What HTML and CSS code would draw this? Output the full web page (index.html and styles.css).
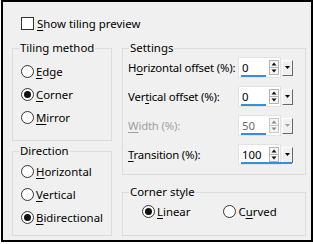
FILE: index.html
```html
<!DOCTYPE html>
<html lang="en">

<head>
    <meta charset="UTF-8">
    <title>Tiling</title>
    <link rel="stylesheet" href="styles.css">
</head>

<body>
    <div class="frame">
        <label class="top-row">
            <span class="check"></span>
            <span><u>S</u>how tiling preview</span>
        </label>
        <div class="groups">
            <div class="groups-left">
                <fieldset class="group group-tiling">
                    <legend>Tiling method</legend>
                    <div class="radio-list">
                        <label class="radio-item"><span class="radio"></span><span><u>E</u>dge</span></label>
                        <label class="radio-item"><span class="radio checked"></span><span><u>C</u>orner</span></label>
                        <label class="radio-item"><span class="radio"></span><span><u>M</u>irror</span></label>
                    </div>
                </fieldset>
                <fieldset class="group group-direction">
                    <legend>Direction</legend>
                    <div class="radio-list">
                        <label class="radio-item"><span class="radio"></span><span><u>H</u>orizontal</span></label>
                        <label class="radio-item"><span class="radio"></span><span><u>V</u>ertical</span></label>
                        <label class="radio-item"><span class="radio checked"></span><span><u>B</u>idirectional</span></label>
                    </div>
                </fieldset>
            </div>
            <div class="groups-right">
                <fieldset class="group group-settings">
                    <legend>Settings</legend>
                    <div class="field-list">
                        <div class="field-row">
                            <span class="field-label">H<u>o</u>rizontal offset (%):</span>
                            <div class="spin">
                                <div class="spin-box"><span class="spin-value">0</span>
                                    <svg class="spin-arrows" width="10" height="15" viewBox="0 0 10 15">
                                        <rect x="0.5" y="0.5" width="9" height="14" fill="#f7f7f7" stroke="#b4b4b4" />
                                        <line x1="0" y1="7.5" x2="10" y2="7.5" stroke="#b4b4b4" />
                                        <path d="M2.5 5.5H7.5L5 2.5Z" fill="#111" />
                                        <path d="M2.5 9.5H7.5L5 12.5Z" fill="#111" />
                                    </svg>
                                </div>
                                <div class="spin-drop"><svg width="5" height="3" viewBox="0 0 5 3"><path d="M0 0H5L2.5 3Z" fill="#000" /></svg></div>
                                <div class="spin-line"></div>
                            </div>
                        </div>
                        <div class="field-row">
                            <span class="field-label">Ver<u>t</u>ical offset (%):</span>
                            <div class="spin">
                                <div class="spin-box"><span class="spin-value">0</span>
                                    <svg class="spin-arrows" width="10" height="15" viewBox="0 0 10 15">
                                        <rect x="0.5" y="0.5" width="9" height="14" fill="#f7f7f7" stroke="#b4b4b4" />
                                        <line x1="0" y1="7.5" x2="10" y2="7.5" stroke="#b4b4b4" />
                                        <path d="M2.5 5.5H7.5L5 2.5Z" fill="#111" />
                                        <path d="M2.5 9.5H7.5L5 12.5Z" fill="#111" />
                                    </svg>
                                </div>
                                <div class="spin-drop"><svg width="5" height="3" viewBox="0 0 5 3"><path d="M0 0H5L2.5 3Z" fill="#000" /></svg></div>
                                <div class="spin-line"></div>
                            </div>
                        </div>
                        <div class="field-row disabled">
                            <span class="field-label"><u>W</u>idth (%):</span>
                            <div class="spin">
                                <div class="spin-box"><span class="spin-value">50</span>
                                    <svg class="spin-arrows" width="10" height="15" viewBox="0 0 10 15">
                                        <rect x="0.5" y="0.5" width="9" height="14" fill="#f4f4f4" stroke="#c8c8c8" />
                                        <line x1="0" y1="7.5" x2="10" y2="7.5" stroke="#c8c8c8" />
                                        <path d="M2.5 5.5H7.5L5 2.5Z" fill="#8a8a8a" />
                                        <path d="M2.5 9.5H7.5L5 12.5Z" fill="#8a8a8a" />
                                    </svg>
                                </div>
                                <div class="spin-drop"><svg width="5" height="3" viewBox="0 0 5 3"><path d="M0 0H5L2.5 3Z" fill="#a0a0a0" /></svg></div>
                                <div class="spin-line"></div>
                            </div>
                        </div>
                        <div class="field-row">
                            <span class="field-label"><u>T</u>ransition (%):</span>
                            <div class="spin">
                                <div class="spin-box"><span class="spin-value">100</span>
                                    <svg class="spin-arrows" width="10" height="15" viewBox="0 0 10 15">
                                        <rect x="0.5" y="0.5" width="9" height="14" fill="#f7f7f7" stroke="#b4b4b4" />
                                        <line x1="0" y1="7.5" x2="10" y2="7.5" stroke="#b4b4b4" />
                                        <path d="M2.5 5.5H7.5L5 2.5Z" fill="#111" />
                                        <path d="M2.5 9.5H7.5L5 12.5Z" fill="#111" />
                                    </svg>
                                </div>
                                <div class="spin-drop"><svg width="5" height="3" viewBox="0 0 5 3"><path d="M0 0H5L2.5 3Z" fill="#000" /></svg></div>
                                <div class="spin-line spin-line-full"></div>
                            </div>
                        </div>
                    </div>
                </fieldset>
                <fieldset class="group group-corner">
                    <legend>Corner style</legend>
                    <div class="radio-row">
                        <label class="radio-item"><span class="radio checked"></span><span><u>L</u>inear</span></label>
                        <label class="radio-item"><span class="radio"></span><span>C<u>u</u>rved</span></label>
                    </div>
                </fieldset>
            </div>
        </div>
    </div>
</body>

</html>
```

FILE: styles.css
```css
body {
    background: #FFFFFF;
    margin: 0;
    font-family: "Noto Sans", "Open Sans", sans-serif;
    font-size: 11.4px;
    color: #000000;
    white-space: nowrap;
}

u {
    text-decoration-thickness: 1px;
    text-underline-offset: 2px;
}

.frame {
    box-sizing: border-box;
    width: 312px;
    height: 242px;
    margin-left: 1px;
    border: 2px solid #000000;
    background: #F0F0F0;
    padding: 0 5px 0 9px;
}

.top-row {
    display: flex;
    align-items: center;
    height: 16px;
    margin: 13px 0 9px 9px;
}

.check {
    box-sizing: border-box;
    width: 13px;
    height: 13px;
    border: 1px solid #333333;
    background: #FFFFFF;
    margin-right: 3px;
}

.groups {
    display: grid;
    grid-template-columns: 100px 184px;
    column-gap: 10px;
}

.groups-left,
.groups-right {
    display: flex;
    flex-direction: column;
}

.group {
    box-sizing: border-box;
    margin: 0;
    padding: 0;
    border: 1px solid #DCDCDC;
    min-width: 0;
}

.group legend {
    padding: 0 1px;
    margin-left: 6px;
    line-height: 16px;
}

.group-tiling {
    height: 101px;
}

.group-tiling .radio-list {
    padding: 4px 0 0 8px;
}

.group-direction {
    height: 93px;
    margin-top: 2px;
}

.group-direction .radio-list {
    padding: 1px 0 0 8px;
}

.group-settings {
    height: 135px;
}

.field-list {
    padding: 1px 12px 0 5px;
}

.field-label {
    letter-spacing: -0.2px;
}

.group-corner {
    height: 52px;
    margin-top: 9px;
}

.radio-list {
    display: flex;
    flex-direction: column;
}

.radio-row {
    display: flex;
    gap: 33px;
    padding-left: 19px;
}

.radio-item {
    display: flex;
    align-items: center;
    height: 23px;
}

.radio {
    position: relative;
    box-sizing: border-box;
    width: 13px;
    height: 13px;
    border: 1px solid #333333;
    border-radius: 50%;
    background: #FFFFFF;
    margin-right: 2px;
}

.radio.checked::after {
    content: "";
    position: absolute;
    left: 2px;
    top: 2px;
    width: 7px;
    height: 7px;
    border-radius: 50%;
    background: #111111;
}

.field-row {
    display: flex;
    align-items: center;
    justify-content: space-between;
    height: 21px;
    margin-bottom: 8px;
}

.field-row.disabled .field-label {
    color: #A0A0A0;
}

.field-row.disabled .spin-value {
    color: #6D6D6D;
}

.spin {
    position: relative;
    display: flex;
    align-items: center;
    height: 21px;
}

.spin-box {
    box-sizing: border-box;
    display: flex;
    align-items: center;
    justify-content: space-between;
    width: 43px;
    height: 21px;
    background: #FFFFFF;
    border: 1px solid #E3E3E3;
    padding: 0 1px 0 3px;
}

.spin-drop {
    box-sizing: border-box;
    display: flex;
    align-items: center;
    justify-content: center;
    width: 11px;
    height: 16px;
    margin-left: 1px;
    background: #F0F0F0;
    border-top: 1px solid #FFFFFF;
    border-left: 1px solid #FFFFFF;
    border-right: 1px solid #696969;
    border-bottom: 1px solid #696969;
}

.spin-line {
    position: absolute;
    left: 3px;
    bottom: 1px;
    width: 25px;
    height: 2px;
    background: #3C8CDC;
}

.spin-line-full {
    width: 51px;
}
```
